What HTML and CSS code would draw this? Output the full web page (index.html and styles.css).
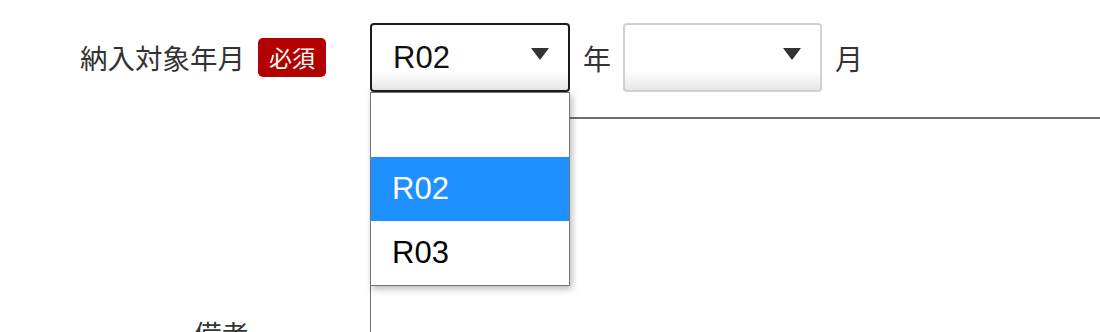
FILE: index.html
```html
<!DOCTYPE html>
<html lang="ja">
<head>
<meta charset="utf-8">
<title>納入対象年月</title>
<link rel="stylesheet" href="styles.css">
</head>
<body>
<div class="form">
  <div class="row row-first">
    <div class="label-cell">
      <span class="label">納入対象年月</span>
      <span class="badge">必須</span>
    </div>
    <div class="field-cell">
      <div class="select-wrap">
        <div class="select select-open">
          <span class="select-value">R02</span>
          <span class="arrow"></span>
        </div>
        <ul class="dropdown">
          <li class="option"></li>
          <li class="option option-active">R02</li>
          <li class="option">R03</li>
        </ul>
      </div>
      <span class="unit">年</span>
      <div class="select select-idle">
        <span class="select-value"></span>
        <span class="arrow"></span>
      </div>
      <span class="unit">月</span>
    </div>
  </div>
  <div class="row row-second">
    <div class="label-cell label-cell-plain">
      <span class="label">備考</span>
    </div>
    <div class="field-cell field-cell-bordered"></div>
  </div>
</div>
</body>
</html>
```

FILE: styles.css
```css
html, body {
  margin: 0;
  padding: 0;
  height: 332px;
  overflow: hidden;
  background: #fff;
}

body {
  font-family: "Noto Sans CJK JP", "Liberation Sans", sans-serif;
  color: #333;
}

.form {
  display: flex;
  flex-direction: column;
  width: 1100px;
}

.row {
  display: flex;
}

.row-first {
  height: 117px;
}

.label-cell {
  width: 370px;
  box-sizing: border-box;
  padding-left: 80px;
  display: flex;
  align-items: center;
  height: 69px;
  margin-top: 23px;
}

.label {
  font-size: 27.5px;
  line-height: 1;
  color: #333;
}

.badge {
  margin-left: 13px;
  width: 68px;
  height: 39px;
  border-radius: 5px;
  background: #b30000;
  color: #fff;
  font-size: 23px;
  line-height: 39px;
  text-align: center;
}

.field-cell {
  display: flex;
  align-items: center;
  margin-top: 23px;
  height: 69px;
}

.select-wrap {
  position: relative;
}

.select {
  box-sizing: border-box;
  width: 200px;
  height: 69px;
  border-radius: 4px;
  background: linear-gradient(#fff 72%, #e6e6e6);
  display: flex;
  align-items: center;
  justify-content: space-between;
  padding: 0 19px 0 21px;
  font-family: "Liberation Sans", Arial, sans-serif;
  font-size: 31px;
  color: #111;
}

.select-open {
  border: 2px solid #1c1c1c;
}

.select-idle {
  width: 199px;
  border: 2px solid #d0d0d0;
}

.arrow {
  width: 0;
  height: 0;
  border-left: 9px solid transparent;
  border-right: 9px solid transparent;
  border-top: 12px solid #333;
  margin-top: -8px;
}

.unit {
  font-size: 28px;
  line-height: 1;
  color: #333;
  margin: 0 12px 0 13px;
}

.dropdown {
  position: absolute;
  top: 69px;
  left: 0;
  width: 200px;
  box-sizing: border-box;
  margin: 0;
  padding: 0;
  list-style: none;
  background: #fff;
  border: 1px solid #767676;
  box-shadow: 2px 3px 7px rgba(0, 0, 0, 0.28);
  z-index: 10;
}

.option {
  height: 64px;
  box-sizing: border-box;
  padding-left: 21px;
  display: flex;
  align-items: center;
  font-family: "Liberation Sans", Arial, sans-serif;
  font-size: 31px;
  color: #000;
}

.option-active {
  background: #1e90ff;
  color: #fff;
}

.label-cell-plain {
  padding-left: 194px;
  margin-top: 0;
  padding-top: 203px;
  height: auto;
  align-items: flex-start;
}

.field-cell-bordered {
  margin-top: 0;
  flex: 1;
  height: 213px;
  border-top: 2px solid #6e6e6e;
  border-left: 1px solid #6e6e6e;
}
```
